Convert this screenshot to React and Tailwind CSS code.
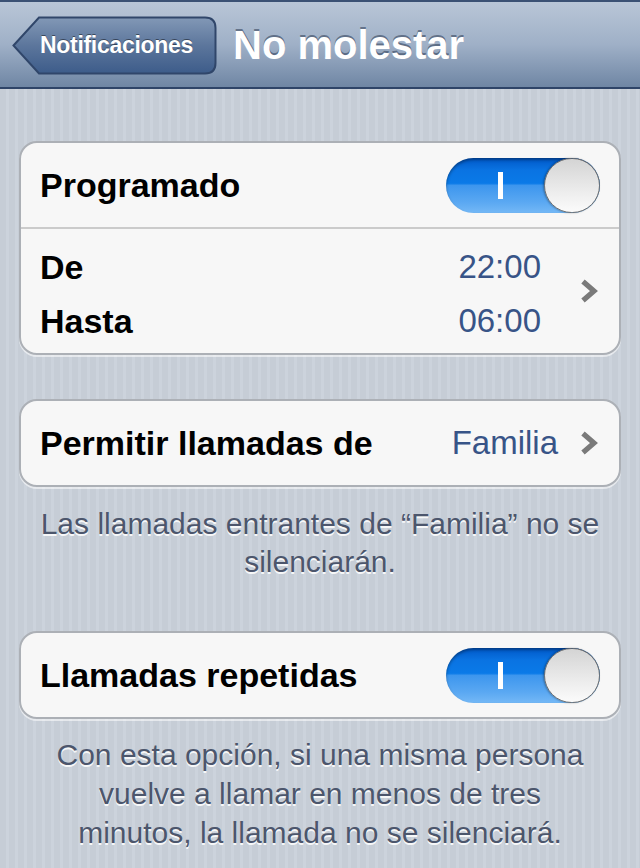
import React from "react";

const font = { fontFamily: '"Liberation Sans", Arial, sans-serif' };

function Chevron() {
  return (
    <svg width="18" height="24" viewBox="0 0 18 24" className="shrink-0">
      <polyline points="3,2.5 14,12 3,21.5" fill="none" stroke="#7a7a7a" strokeWidth="5.2" strokeLinejoin="miter" strokeLinecap="butt" />
    </svg>
  );
}

function Toggle() {
  return (
    <div className="relative w-[154px] h-[55px] rounded-full bg-[linear-gradient(180deg,#0058c8_0%,#0a73e2_22%,#0a7ae8_46%,#3d96ee_50%,#5aa8f2_80%,#74b8f6_100%)] shadow-[inset_0_2px_3px_rgba(0,0,0,0.35)]">
      <div className="absolute left-[52px] top-[14px] w-[5px] h-[27px] bg-white" />
      <div className="absolute right-0 top-0 w-[56px] h-[55px] rounded-full border border-[#6f6f6f] bg-[linear-gradient(180deg,#d4d4d4_0%,#ececec_60%,#fbfbfb_100%)] shadow-[-1px_0_2px_rgba(0,0,0,0.3)]" />
    </div>
  );
}

function Card({ children }) {
  return (
    <div className="mx-[19px] rounded-[18px] border-2 border-[#acb0b6] bg-[#f7f7f7] shadow-[0_2px_0_rgba(255,255,255,0.55)] overflow-hidden">
      {children}
    </div>
  );
}

export default function App() {
  return (
    <div
      style={font}
      className="w-[640px] h-[868px] overflow-hidden bg-[repeating-linear-gradient(90deg,#c6cdd6_0px,#c6cdd6_6px,#ccd3dc_6px,#ccd3dc_9px)]"
    >
      {/* Nav bar */}
      <div className="h-[89px] border-t-2 border-b-2 border-t-[#3b5174] border-b-[#2e4468] bg-[linear-gradient(180deg,#b9c6d7_0%,#9fb0c7_50%,#6f86a4_100%)] flex items-center pl-[12px] gap-[16px]">
        <div className="relative w-[205px] h-[59px] flex items-center justify-center pl-[4px] mt-[1px]">
          <svg width="205" height="59" viewBox="0 0 205 59" className="absolute inset-0">
            <defs>
              <linearGradient id="bb" x1="0" y1="0" x2="0" y2="1">
                <stop offset="0" stopColor="#8298b6" />
                <stop offset="0.5" stopColor="#5c769c" />
                <stop offset="1" stopColor="#3d5c8a" />
              </linearGradient>
            </defs>
            <path d="M1.5,29.5 L27,1.5 H193 Q203.5,1.5 203.5,12 V47 Q203.5,57.5 193,57.5 H27 Z" fill="url(#bb)" stroke="#30466a" strokeWidth="2" />
          </svg>
          <span className="relative text-white font-bold text-[23px] tracking-[-0.3px] leading-none [text-shadow:0_-1px_0_rgba(0,0,0,0.45)]">Notificaciones</span>
        </div>
        <div className="text-white font-bold text-[40px] leading-none [text-shadow:0_-2px_0_rgba(40,55,80,0.55)]">No molestar</div>
      </div>

      <div className="pt-[52px]">
        <Card>
          <div className="h-[86px] flex items-center justify-between pl-[19px] pr-[19px] border-b-2 border-[#cbcbcb]">
            <span className="text-[34px] font-bold text-black">Programado</span>
            <Toggle />
          </div>
          <div className="h-[124px] flex items-center pl-[19px] pr-[21px]">
            <div className="flex-1 pt-[6px]">
              <div className="flex justify-between leading-[54px]">
                <span className="text-[34px] font-bold text-black">De</span>
                <span className="text-[33px] text-[#385487]">22:00</span>
              </div>
              <div className="flex justify-between leading-[54px]">
                <span className="text-[34px] font-bold text-black">Hasta</span>
                <span className="text-[33px] text-[#385487]">06:00</span>
              </div>
            </div>
            <div className="w-[57px] flex justify-end">
              <Chevron />
            </div>
          </div>
        </Card>

        <div className="h-[44px]" />
        <Card>
          <div className="h-[84px] flex items-center pl-[19px] pr-[21px]">
            <span className="flex-1 text-[34px] font-bold text-black">Permitir llamadas de</span>
            <span className="text-[33px] text-[#385487]">Familia</span>
            <div className="w-[40px] flex justify-end">
              <Chevron />
            </div>
          </div>
        </Card>

        <div className="mt-[18px] text-center text-[30px] leading-[38px] text-[#4c566c] [text-shadow:0_2px_0_rgba(255,255,255,0.85)]">
          Las llamadas entrantes de “Familia” no se
          <br />
          silenciarán.
        </div>

        <div className="h-[50px]" />
        <Card>
          <div className="h-[84px] flex items-center justify-between pl-[19px] pr-[19px]">
            <span className="text-[34px] font-bold text-black">Llamadas repetidas</span>
            <Toggle />
          </div>
        </Card>

        <div className="mt-[16px] text-center text-[30px] leading-[39px] text-[#4c566c] [text-shadow:0_2px_0_rgba(255,255,255,0.85)]">
          Con esta opción, si una misma persona
          <br />
          vuelve a llamar en menos de tres
          <br />
          minutos, la llamada no se silenciará.
        </div>
      </div>
    </div>
  );
}
